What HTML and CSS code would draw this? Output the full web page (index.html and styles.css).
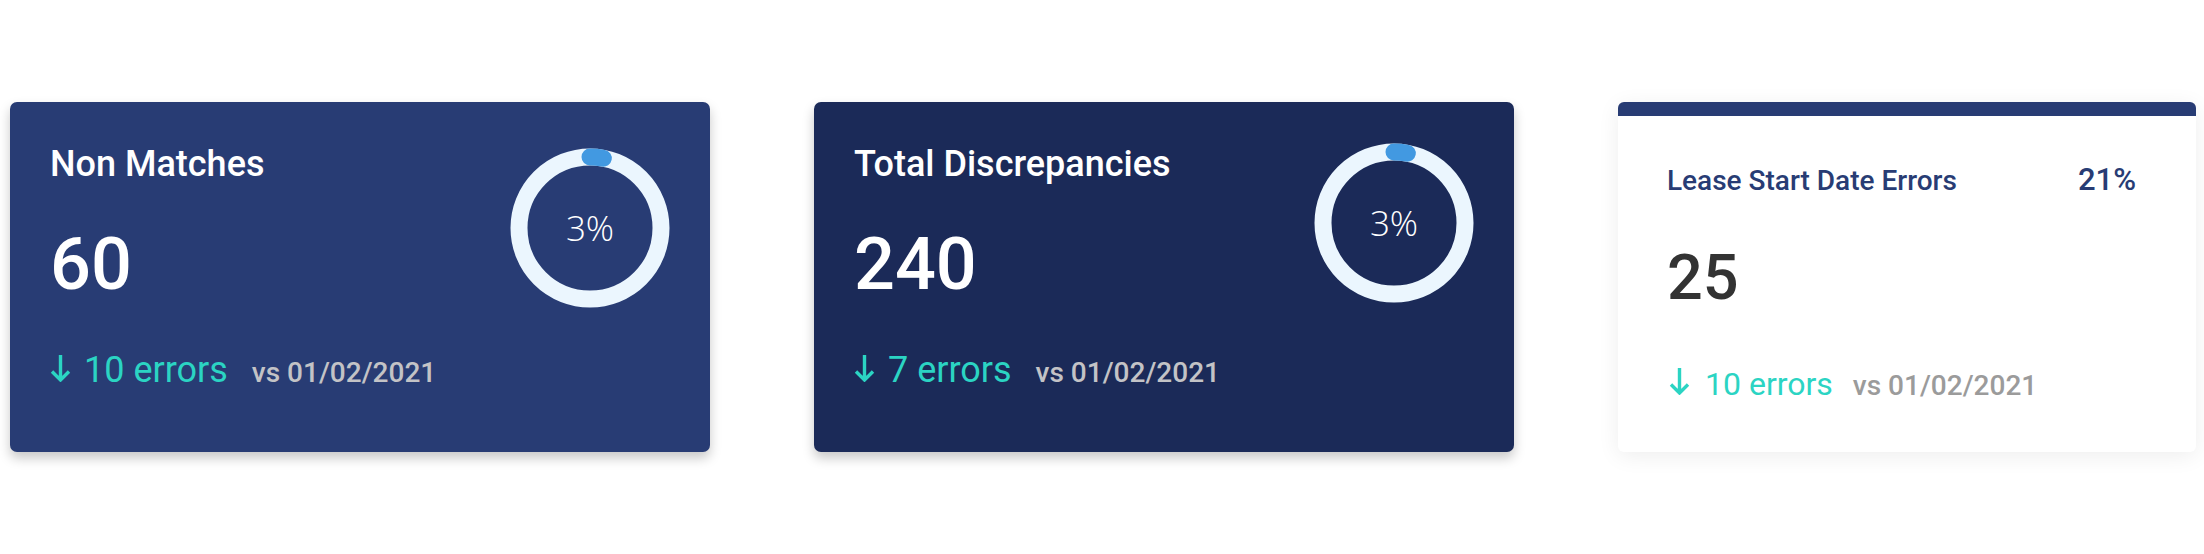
FILE: index.html
```html
<!DOCTYPE html>
<html lang="en">
<head>
<meta charset="utf-8">
<title>Discrepancy summary</title>
<link rel="stylesheet" href="styles.css">
</head>
<body>
<main class="cards">
  <section class="card card--blue">
    <div class="card__main">
      <h2 class="card__title">Non Matches</h2>
      <div class="card__value">60</div>
      <div class="trend">
        <svg class="trend__arrow" viewBox="0 0 21 28" aria-hidden="true"><path d="M10.5 1 V26 M2 17.5 L10.5 26 L19 17.5"/></svg>
        <span class="trend__count">10 errors</span>
        <span class="trend__date">vs 01/02/2021</span>
      </div>
    </div>
    <div class="donut donut--low">
      <svg class="donut__svg" viewBox="0 0 160 160" aria-hidden="true">
        <circle class="donut__track" cx="80" cy="80" r="71"/>
        <circle class="donut__bar" cx="80" cy="80" r="71" transform="rotate(-90 80 80)" stroke-dasharray="13.4 446"/>
      </svg>
      <span class="donut__label">3%</span>
    </div>
  </section>

  <section class="card card--navy">
    <div class="card__main">
      <h2 class="card__title">Total Discrepancies</h2>
      <div class="card__value">240</div>
      <div class="trend">
        <svg class="trend__arrow" viewBox="0 0 21 28" aria-hidden="true"><path d="M10.5 1 V26 M2 17.5 L10.5 26 L19 17.5"/></svg>
        <span class="trend__count">7 errors</span>
        <span class="trend__date">vs 01/02/2021</span>
      </div>
    </div>
    <div class="donut donut--high">
      <svg class="donut__svg" viewBox="0 0 160 160" aria-hidden="true">
        <circle class="donut__track" cx="80" cy="80" r="71"/>
        <circle class="donut__bar" cx="80" cy="80" r="71" transform="rotate(-90 80 80)" stroke-dasharray="13.4 446"/>
      </svg>
      <span class="donut__label">3%</span>
    </div>
  </section>

  <section class="card card--light">
    <div class="light__head">
      <h2 class="light__title">Lease Start Date Errors</h2>
      <span class="light__pct">21%</span>
    </div>
    <div class="light__value">25</div>
    <div class="trend trend--light">
      <svg class="trend__arrow" viewBox="0 0 21 28" aria-hidden="true"><path d="M10.5 1 V26 M2 17.5 L10.5 26 L19 17.5"/></svg>
      <span class="trend__count">10 errors</span>
      <span class="trend__date">vs 01/02/2021</span>
    </div>
  </section>
</main>
</body>
</html>
```

FILE: styles.css
```css
* { box-sizing: border-box; }

html, body {
  margin: 0;
  padding: 0;
  background: #ffffff;
}

body {
  font-family: Roboto, "Noto Sans", Arial, sans-serif;
  width: 2204px;
  height: 554px;
  overflow: hidden;
}

.cards {
  display: flex;
  align-items: flex-start;
  gap: 104px;
  padding: 102px 8px 0 10px;
}

.card {
  height: 350px;
  border-radius: 7px;
  flex: none;
}

.card--blue,
.card--navy {
  width: 700px;
  display: flex;
  justify-content: space-between;
  align-items: flex-start;
  padding: 42px 40px 0 40px;
  box-shadow: 0 6px 12px rgba(0, 0, 0, 0.22);
  color: #ffffff;
}

.card--blue { background: #283c74; }
.card--navy { background: #1b2a58; }

.card__title {
  margin: 0;
  font-size: 36px;
  line-height: 40px;
  font-weight: 500;
}

.card__value {
  margin-top: 41px;
  font-size: 72px;
  line-height: 80px;
  font-weight: 500;
}

.trend {
  display: flex;
  align-items: baseline;
  margin-top: 45px;
  line-height: 40px;
}

.trend__arrow {
  width: 21px;
  height: 28px;
  margin-right: 13px;
  fill: none;
  stroke: #2bd4c3;
  stroke-width: 3.4;
}

.trend__count {
  font-size: 36px;
  color: #2bd4c3;
  font-weight: 400;
}

.trend__date {
  margin-left: 24px;
  font-size: 28px;
  font-weight: 500;
  color: #c3c3c6;
}

.donut {
  display: grid;
  width: 160px;
  height: 160px;
  place-items: center;
}

.donut--low { margin-top: 3.5px; }
.donut--high { margin-top: -1.5px; }

.donut__svg,
.donut__label {
  grid-area: 1 / 1;
}

.donut__svg {
  width: 160px;
  height: 160px;
}

.donut__track {
  fill: none;
  stroke: #ebf6fe;
  stroke-width: 17;
}

.donut__bar {
  fill: none;
  stroke: #4299e1;
  stroke-width: 17;
  stroke-linecap: round;
}

.donut__label {
  font-family: "Open Sans", "Liberation Sans", Arial, sans-serif;
  font-size: 35px;
  font-weight: 300;
  color: #ffffff;
}

.card--light {
  width: 578px;
  background: #ffffff;
  border-top: 14px solid #283c74;
  border-radius: 6px;
  padding: 48px 60px 0 49px;
  box-shadow: 0 4px 22px rgba(0, 0, 0, 0.07);
}

.light__head {
  display: flex;
  justify-content: space-between;
  align-items: baseline;
}

.light__title {
  margin: 0;
  font-size: 28px;
  line-height: 32px;
  font-weight: 500;
  color: #283c74;
}

.light__pct {
  font-size: 31px;
  line-height: 32px;
  font-weight: 500;
  color: #283c74;
}

.light__value {
  margin-top: 46px;
  font-size: 63px;
  line-height: 70px;
  font-weight: 500;
  color: #333333;
}

.trend--light {
  margin-top: 53px;
  line-height: 36px;
}

.trend--light .trend__arrow {
  margin-left: 2px;
  margin-right: 15px;
}

.trend--light .trend__count { font-size: 32px; }

.trend--light .trend__date {
  margin-left: 20px;
  font-size: 28px;
  color: #9b9b9b;
}
```
